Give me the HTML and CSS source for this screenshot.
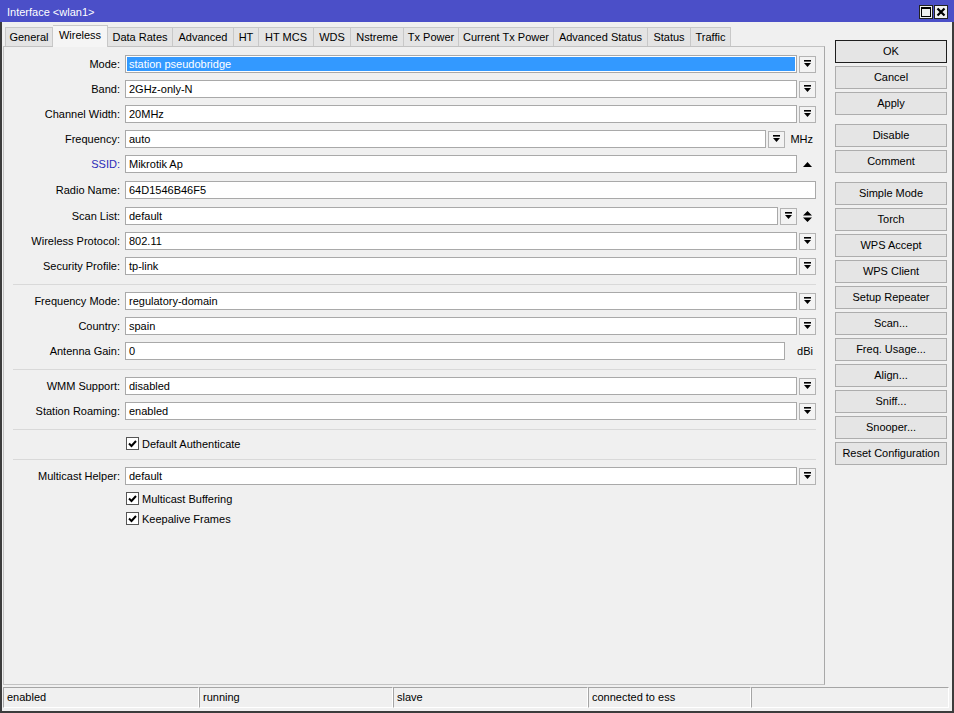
FILE: index.html
```html
<!DOCTYPE html>
<html lang="en">
<head>
    <meta charset="UTF-8">
    <title>Interface &lt;wlan1&gt;</title>
    <link rel="stylesheet" href="styles.css">
</head>
<body>
    <div class="window">
        <div class="titlebar">
            <span class="title">Interface &lt;wlan1&gt;</span>
            <div class="wbtns">
                <span class="wbtn">
                    <svg width="10" height="10" viewBox="0 0 10 10"><rect x="0.5" y="0.5" width="9" height="9" fill="none" stroke="#000"/><rect x="0" y="0" width="10" height="2" fill="#000"/></svg>
                </span>
                <span class="wbtn">
                    <svg width="10" height="10" viewBox="0 0 10 10"><path d="M1.5 1.5L8.5 8.5M8.5 1.5L1.5 8.5" stroke="#000" stroke-width="2.2"/></svg>
                </span>
            </div>
        </div>

        <div class="frame">
            <div class="content">
                <div class="main">
                    <div class="tabs">
                        <div class="tab">General</div>
                        <div class="tab active">Wireless</div>
                        <div class="tab">Data Rates</div>
                        <div class="tab">Advanced</div>
                        <div class="tab">HT</div>
                        <div class="tab">HT MCS</div>
                        <div class="tab">WDS</div>
                        <div class="tab">Nstreme</div>
                        <div class="tab">Tx Power</div>
                        <div class="tab">Current Tx Power</div>
                        <div class="tab">Advanced Status</div>
                        <div class="tab">Status</div>
                        <div class="tab">Traffic</div>
                    </div>

                    <div class="panel">
                        <div class="row">
                            <div class="lbl">Mode:</div>
                            <div class="ctl">
                                <div class="field sel">station pseudobridge</div>
                                <span class="dd"><svg width="7" height="8" viewBox="0 0 7 8"><rect width="7" height="1.6"/><path d="M0 3h7L3.5 7z"/></svg></span>
                            </div>
                        </div>
                        <div class="row">
                            <div class="lbl">Band:</div>
                            <div class="ctl">
                                <div class="field">2GHz-only-N</div>
                                <span class="dd"><svg width="7" height="8" viewBox="0 0 7 8"><rect width="7" height="1.6"/><path d="M0 3h7L3.5 7z"/></svg></span>
                            </div>
                        </div>
                        <div class="row">
                            <div class="lbl">Channel Width:</div>
                            <div class="ctl">
                                <div class="field">20MHz</div>
                                <span class="dd"><svg width="7" height="8" viewBox="0 0 7 8"><rect width="7" height="1.6"/><path d="M0 3h7L3.5 7z"/></svg></span>
                            </div>
                        </div>
                        <div class="row">
                            <div class="lbl">Frequency:</div>
                            <div class="ctl">
                                <div class="field">auto</div>
                                <span class="dd"><svg width="7" height="8" viewBox="0 0 7 8"><rect width="7" height="1.6"/><path d="M0 3h7L3.5 7z"/></svg></span>
                                <span class="unit">MHz</span>
                            </div>
                        </div>
                        <div class="row wide">
                            <div class="lbl link">SSID:</div>
                            <div class="ctl">
                                <div class="field">Mikrotik Ap</div>
                                <span class="arrow"><svg width="9" height="5" viewBox="0 0 9 5"><path d="M0 5L4.5 0L9 5z"/></svg></span>
                            </div>
                        </div>
                        <div class="row wide">
                            <div class="lbl">Radio Name:</div>
                            <div class="ctl">
                                <div class="field">64D1546B46F5</div>
                            </div>
                        </div>
                        <div class="row">
                            <div class="lbl">Scan List:</div>
                            <div class="ctl">
                                <div class="field">default</div>
                                <span class="dd"><svg width="7" height="8" viewBox="0 0 7 8"><rect width="7" height="1.6"/><path d="M0 3h7L3.5 7z"/></svg></span>
                                <span class="arrow"><svg width="9" height="11" viewBox="0 0 9 11"><path d="M0 4.5L4.5 0L9 4.5z M0 6.5H9L4.5 11z"/></svg></span>
                            </div>
                        </div>
                        <div class="row">
                            <div class="lbl">Wireless Protocol:</div>
                            <div class="ctl">
                                <div class="field">802.11</div>
                                <span class="dd"><svg width="7" height="8" viewBox="0 0 7 8"><rect width="7" height="1.6"/><path d="M0 3h7L3.5 7z"/></svg></span>
                            </div>
                        </div>
                        <div class="row">
                            <div class="lbl">Security Profile:</div>
                            <div class="ctl">
                                <div class="field">tp-link</div>
                                <span class="dd"><svg width="7" height="8" viewBox="0 0 7 8"><rect width="7" height="1.6"/><path d="M0 3h7L3.5 7z"/></svg></span>
                            </div>
                        </div>

                        <div class="sep"></div>

                        <div class="row">
                            <div class="lbl">Frequency Mode:</div>
                            <div class="ctl">
                                <div class="field">regulatory-domain</div>
                                <span class="dd"><svg width="7" height="8" viewBox="0 0 7 8"><rect width="7" height="1.6"/><path d="M0 3h7L3.5 7z"/></svg></span>
                            </div>
                        </div>
                        <div class="row">
                            <div class="lbl">Country:</div>
                            <div class="ctl">
                                <div class="field">spain</div>
                                <span class="dd"><svg width="7" height="8" viewBox="0 0 7 8"><rect width="7" height="1.6"/><path d="M0 3h7L3.5 7z"/></svg></span>
                            </div>
                        </div>
                        <div class="row">
                            <div class="lbl">Antenna Gain:</div>
                            <div class="ctl">
                                <div class="field">0</div>
                                <span class="unit">dBi</span>
                            </div>
                        </div>

                        <div class="sep"></div>

                        <div class="row">
                            <div class="lbl">WMM Support:</div>
                            <div class="ctl">
                                <div class="field">disabled</div>
                                <span class="dd"><svg width="7" height="8" viewBox="0 0 7 8"><rect width="7" height="1.6"/><path d="M0 3h7L3.5 7z"/></svg></span>
                            </div>
                        </div>
                        <div class="row">
                            <div class="lbl">Station Roaming:</div>
                            <div class="ctl">
                                <div class="field">enabled</div>
                                <span class="dd"><svg width="7" height="8" viewBox="0 0 7 8"><rect width="7" height="1.6"/><path d="M0 3h7L3.5 7z"/></svg></span>
                            </div>
                        </div>

                        <div class="sep"></div>

                        <div class="row chk">
                            <div class="lbl"></div>
                            <div class="ctl">
                                <span class="box"><svg width="11" height="11" viewBox="0 0 11 11"><path d="M2 5.5L4.5 8L9 3" fill="none" stroke="#000" stroke-width="2"/></svg></span>
                                <span class="chk-text">Default Authenticate</span>
                            </div>
                        </div>

                        <div class="sep"></div>

                        <div class="row">
                            <div class="lbl">Multicast Helper:</div>
                            <div class="ctl">
                                <div class="field">default</div>
                                <span class="dd"><svg width="7" height="8" viewBox="0 0 7 8"><rect width="7" height="1.6"/><path d="M0 3h7L3.5 7z"/></svg></span>
                            </div>
                        </div>
                        <div class="row chk">
                            <div class="lbl"></div>
                            <div class="ctl">
                                <span class="box"><svg width="11" height="11" viewBox="0 0 11 11"><path d="M2 5.5L4.5 8L9 3" fill="none" stroke="#000" stroke-width="2"/></svg></span>
                                <span class="chk-text">Multicast Buffering</span>
                            </div>
                        </div>
                        <div class="row chk">
                            <div class="lbl"></div>
                            <div class="ctl">
                                <span class="box"><svg width="11" height="11" viewBox="0 0 11 11"><path d="M2 5.5L4.5 8L9 3" fill="none" stroke="#000" stroke-width="2"/></svg></span>
                                <span class="chk-text">Keepalive Frames</span>
                            </div>
                        </div>
                    </div>
                </div>

                <div class="side">
                    <div class="btn default">OK</div>
                    <div class="btn">Cancel</div>
                    <div class="btn">Apply</div>
                    <div class="btn gap">Disable</div>
                    <div class="btn">Comment</div>
                    <div class="btn gap">Simple Mode</div>
                    <div class="btn">Torch</div>
                    <div class="btn">WPS Accept</div>
                    <div class="btn">WPS Client</div>
                    <div class="btn">Setup Repeater</div>
                    <div class="btn">Scan...</div>
                    <div class="btn">Freq. Usage...</div>
                    <div class="btn">Align...</div>
                    <div class="btn">Sniff...</div>
                    <div class="btn">Snooper...</div>
                    <div class="btn">Reset Configuration</div>
                </div>
            </div>

            <div class="statusbar">
                <div class="cell c1">enabled</div>
                <div class="cell c2">running</div>
                <div class="cell c3">slave</div>
                <div class="cell c4">connected to ess</div>
                <div class="cell c5"></div>
            </div>
        </div>
    </div>
</body>
</html>
```

FILE: styles.css
```css
* {
    box-sizing: border-box;
}

body {
    margin: 0;
    font-family: "Liberation Sans", Arial, sans-serif;
    font-size: 11px;
    color: #000;
    background: #f0f0f0;
}

.window {
    width: 954px;
    height: 713px;
    display: flex;
    flex-direction: column;
    background: #f0f0f0;
}

/* title bar */
.titlebar {
    height: 22px;
    flex-shrink: 0;
    background: #4b4fc8;
    color: #fff;
    display: flex;
    align-items: center;
    justify-content: space-between;
    padding: 1px 6px 0 7px;
}

.wbtns {
    display: flex;
    gap: 1px;
}

.wbtn {
    width: 14px;
    height: 14px;
    background: #f0f0f0;
    border: 1px solid #222;
    display: flex;
    align-items: center;
    justify-content: center;
}

.frame {
    flex: 1;
    border: 2px solid #3c3c3c;
    border-top: none;
}

.content {
    display: flex;
}

.main {
    width: 822px;
    margin: 3px 0 0 1px;
}

/* tabs */
.tabs {
    display: flex;
    align-items: flex-end;
    height: 21px;
    padding-left: 2px;
}

.tab {
    height: 19px;
    line-height: 18px;
    text-align: center;
    background: #e4e4e4;
    border-top: 1px solid #c8c8c8;
    border-right: 1px solid #c8c8c8;
    white-space: nowrap;
}

.tab:first-child {
    border-left: 1px solid #c8c8c8;
}

.tab.active {
    height: 22px;
    margin-bottom: -1px;
    line-height: 19px;
    background: #f5f5f5;
    position: relative;
}

/* tab widths as measured on the original window */
.tab:nth-child(1) { width: 48px; }
.tab:nth-child(2) { width: 55px; }
.tab:nth-child(3) { width: 65px; }
.tab:nth-child(4) { width: 61px; }
.tab:nth-child(5) { width: 25px; }
.tab:nth-child(6) { width: 55px; }
.tab:nth-child(7) { width: 37px; }
.tab:nth-child(8) { width: 53px; }
.tab:nth-child(9) { width: 55px; }
.tab:nth-child(10) { width: 95px; }
.tab:nth-child(11) { width: 94px; }
.tab:nth-child(12) { width: 43px; }
.tab:nth-child(13) { width: 40px; }

.panel {
    height: 639px;
    display: flex;
    flex-direction: column;
    border: 1px solid #c2c2c2;
    border-right-color: #a8a8a8;
    padding: 8px 8px 0 0;
}

/* form rows */
.row {
    display: flex;
    align-items: center;
    flex-shrink: 0;
    height: 18px;
    margin-bottom: 7px;
}

.row.wide {
    margin-bottom: 8px;
}

.row.chk {
    height: 13px;
}

.lbl {
    width: 116px;
    flex-shrink: 0;
    text-align: right;
    white-space: nowrap;
}

.lbl.link {
    color: #2b2bb8;
}

.ctl {
    flex: 1;
    margin-left: 5px;
    display: flex;
    align-items: center;
    gap: 2px;
    height: 100%;
}

.field {
    flex: 1;
    height: 18px;
    line-height: 16px;
    padding: 0 3px;
    background: #fff;
    border: 1px solid #a9a9a9;
    white-space: nowrap;
    overflow: hidden;
}

.field.sel {
    background: #3399ff;
    color: #fff;
    box-shadow: inset 0 0 0 1px #fff;
}

.dd {
    width: 17px;
    height: 17px;
    flex-shrink: 0;
    background: #f3f3f3;
    border: 1px solid #b3b3b3;
    display: flex;
    align-items: center;
    justify-content: center;
}

.arrow {
    width: 17px;
    flex-shrink: 0;
    display: flex;
    align-items: center;
    justify-content: center;
}

.unit {
    width: 29px;
    flex-shrink: 0;
    text-align: right;
    padding-right: 3px;
}

.sep {
    height: 1px;
    flex-shrink: 0;
    background: #d9d9d9;
    margin: 2px 0 7px 9px;
}

.box {
    width: 13px;
    height: 13px;
    margin-left: 1px;
    background: #fff;
    border: 1px solid #555;
    display: flex;
    align-items: center;
    justify-content: center;
}

.chk-text {
    margin-left: 1px;
}

/* right side buttons */
.side {
    width: 112px;
    margin-left: 10px;
    padding-top: 18px;
    display: flex;
    flex-direction: column;
}

.btn {
    height: 23px;
    flex-shrink: 0;
    line-height: 21px;
    margin-bottom: 3px;
    text-align: center;
    background: #e5e5e5;
    border: 1px solid #adadad;
    white-space: nowrap;
}

.btn.default {
    border-color: #1e1e1e;
}

.btn.gap {
    margin-top: 6px;
}

/* status bar */
.statusbar {
    display: flex;
    height: 21px;
    margin: 2px 0 0 1px;
}

.cell {
    height: 21px;
    line-height: 19px;
    padding-left: 3px;
    border: 1px solid #a5a5a5;
    border-right-color: #fff;
    border-bottom-color: #fff;
}

.c1 { width: 196px; }
.c2 { width: 194px; }
.c3 { width: 195px; }
.c4 { width: 163px; }
.c5 { width: 198px; }
```
